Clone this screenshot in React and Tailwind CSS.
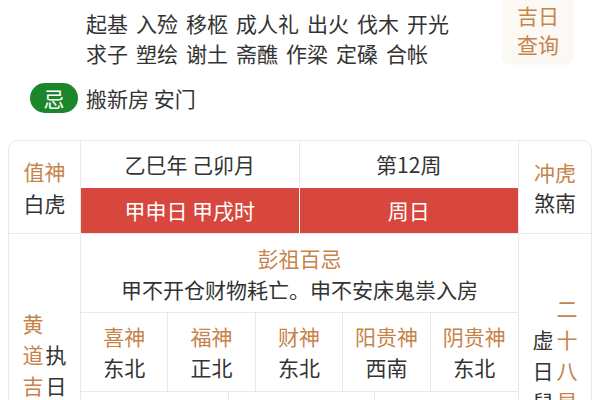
import React from "react";

/* ----------------- Data ----------------- */
const yiLines = [
  ["祭祀", "祈福", "求嗣", "开光", "出行", "解除", "纳采"],
  ["起基", "入殓", "移柩", "成人礼", "出火", "伐木", "开光"],
  ["求子", "塑绘", "谢土", "斋醮", "作梁", "定磉", "合帐"],
];

const gods = [
  ["喜神", "东北"],
  ["福神", "正北"],
  ["财神", "东北"],
  ["阳贵神", "西南"],
  ["阴贵神", "东北"],
];

/* ----------------- Pieces ----------------- */
function VCol({ chars, className = "" }) {
  return (
    <div className={`flex flex-col items-center leading-[31px] ${className}`}>
      {chars.split("").map((c, i) => (
        <span key={i}>{c}</span>
      ))}
    </div>
  );
}

export default function App() {
  return (
    <div className="w-[600px] h-[400px] overflow-hidden bg-white text-[21px] text-[#333] font-['Noto_Sans_CJK_SC','Noto_Sans',sans-serif]">
      {/* 宜 */}
      <div className="-mt-[22px] flex">
        <div className="pl-[86px] flex-1">
          {yiLines.map((line, i) => (
            <div
              key={i}
              className={`flex gap-[8px] h-[30px] ${i === 0 ? "leading-[21px]" : "leading-[30px]"}`}
            >
              {line.map((w) => (
                <span key={w}>{w}</span>
              ))}
            </div>
          ))}
        </div>
        <div className="mt-[10px] mr-[27px] w-[70px] h-[75px] rounded-lg bg-[#fcf8f4] shadow-[0_1px_3px_rgba(0,0,0,0.05)] pt-[13px] text-center text-[#c6834a] leading-[29px]">
          <div>吉日</div>
          <div>查询</div>
        </div>
      </div>

      {/* 忌 */}
      <div className="mt-[15px] flex items-center">
        <div className="ml-[30px] w-[48px] h-[30px] rounded-full bg-[#1c872a] text-white flex items-center justify-center leading-none">
          忌
        </div>
        <div className="ml-[8px] leading-[30px]">搬新房 安门</div>
      </div>

      {/* 表格 */}
      <div className="mx-[8px] mt-[27px] rounded-[10px] border border-[#e9e9e9] grid grid-cols-[72px_1fr_72px]">
        {/* row 1 */}
        <div className="border-r border-b border-[#e9e9e9] flex flex-col items-center justify-center leading-[32px]">
          <span className="text-[#c6834a]">值神</span>
          <span>白虎</span>
        </div>
        <div className="border-r border-b border-[#e9e9e9] grid grid-cols-2">
          <div className="h-[47px] border-r border-[#e9e9e9] flex items-center justify-center">
            乙巳年 己卯月
          </div>
          <div className="h-[47px] flex items-center justify-center">第12周</div>
          <div className="h-[45px] mr-[1px] bg-[#d8473d] text-white flex items-center justify-center">
            甲申日 甲戌时
          </div>
          <div className="h-[45px] bg-[#d8473d] text-white flex items-center justify-center">
            周日
          </div>
        </div>
        <div className="border-b border-[#e9e9e9] flex flex-col items-center justify-center leading-[30px]">
          <span className="text-[#c6834a]">冲虎</span>
          <span>煞南</span>
        </div>

        {/* row 2 */}
        <div className="border-r border-[#e9e9e9] flex items-center justify-center gap-[2px]">
          <VCol chars="黄道吉日" className="text-[#c6834a]" />
          <VCol chars="执日" />
        </div>
        <div className="border-r border-[#e9e9e9] flex flex-col">
          <div className="h-[79px] border-b border-[#e9e9e9] flex flex-col items-center pt-[9px] leading-[31px]">
            <span className="text-[#c6834a]">彭祖百忌</span>
            <span>甲不开仓财物耗亡。申不安床鬼祟入房</span>
          </div>
          <div className="grid grid-cols-5 border-b border-[#e9e9e9]">
            {gods.map(([k, v], i) => (
              <div
                key={k}
                className={`h-[78px] flex flex-col items-center justify-center leading-[31px] ${
                  i < 4 ? "border-r border-[#e9e9e9]" : ""
                }`}
              >
                <span className="text-[#c6834a]">{k}</span>
                <span>{v}</span>
              </div>
            ))}
          </div>
          <div className="grid grid-cols-[148px_146px_1fr] h-[114px]">
            <div className="border-r border-[#e9e9e9] flex flex-col items-center justify-center leading-[31px]">
              <span className="text-[#c6834a]">胎神</span>
              <span>占门碓</span>
            </div>
            <div className="border-r border-[#e9e9e9] flex flex-col items-center justify-center leading-[31px]">
              <span className="text-[#c6834a]">五行</span>
              <span>泉中水</span>
            </div>
            <div className="flex flex-col items-center justify-center leading-[31px]">
              <span className="text-[#c6834a]">星宿</span>
              <span>虚宿星</span>
            </div>
          </div>
        </div>
        <div className="flex items-center justify-center gap-[3px]">
          <VCol chars="虚日鼠" />
          <VCol chars="二十八星宿" className="text-[#c6834a]" />
        </div>
      </div>
    </div>
  );
}
